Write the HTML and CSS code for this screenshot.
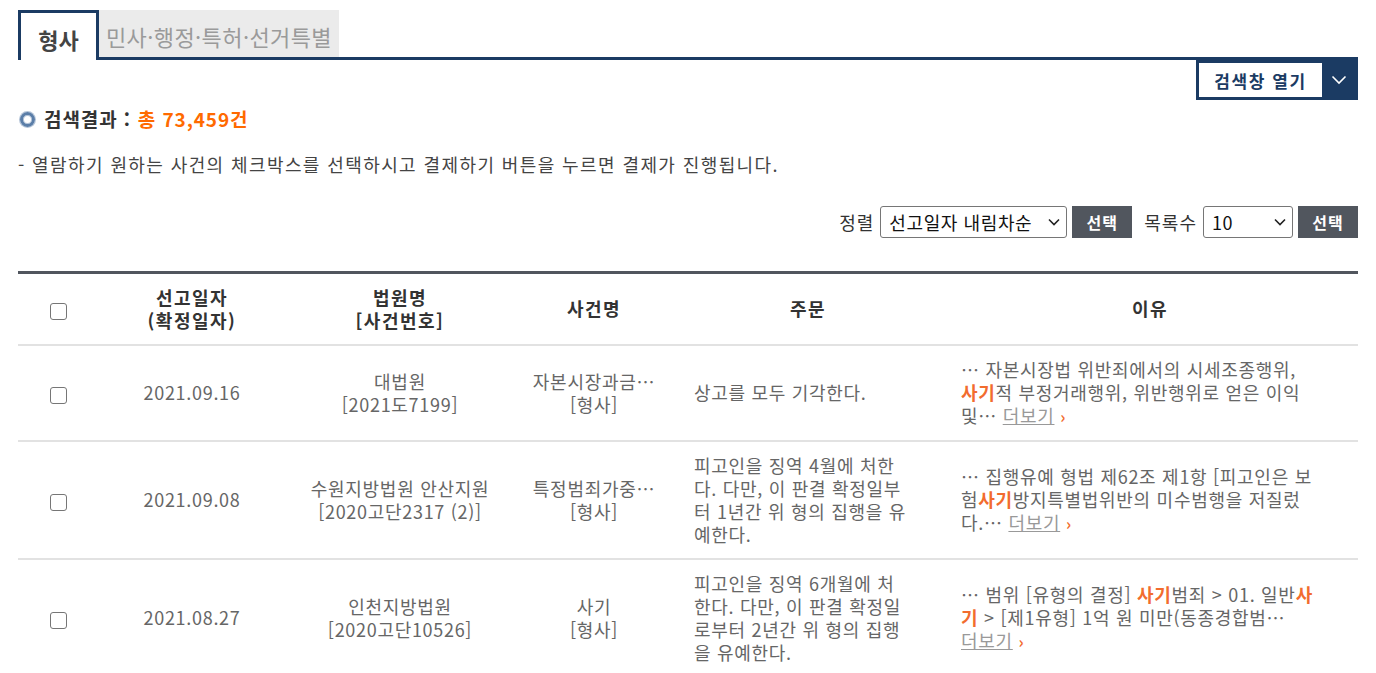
FILE: index.html
```html
<!DOCTYPE html>
<html lang="ko">
<head>
<meta charset="utf-8">
<title>판결서 검색</title>
<link rel="stylesheet" href="styles.css">
</head>
<body>
<div class="wrap">
  <div class="tabs">
    <div class="tab active">형사</div>
    <div class="tab">민사·행정·특허·선거특별</div>
  </div>
  <div class="toggle-row">
    <button class="toggle"><span class="toggle-label">검색창 열기</span><span class="toggle-arrow"><svg width="16" height="10" viewBox="0 0 16 10"><path d="M1.5 1.5 L8 8 L14.5 1.5" fill="none" stroke="#fff" stroke-width="1.6"/></svg></span></button>
  </div>
  <div class="result">
    <span class="bullet"></span>
    <span class="result-label">검색결과 :</span>
    <span class="result-count">총 73,459건</span>
  </div>
  <p class="note">- 열람하기 원하는 사건의 체크박스를 선택하시고 결제하기 버튼을 누르면 결제가 진행됩니다.</p>
  <div class="sort-row">
    <label class="sort-label">정렬</label>
    <span class="sel-wrap sel-sort"><select class="sel"><option>선고일자 내림차순</option></select><svg class="sel-arrow" width="12" height="8" viewBox="0 0 12 8"><path d="M1 1.5 L6 6.5 L11 1.5" fill="none" stroke="#222" stroke-width="1.6"/></svg></span>
    <button class="btn-select">선택</button>
    <label class="sort-label gap">목록수</label>
    <span class="sel-wrap sel-count"><select class="sel"><option>10</option></select><svg class="sel-arrow" width="12" height="8" viewBox="0 0 12 8"><path d="M1 1.5 L6 6.5 L11 1.5" fill="none" stroke="#222" stroke-width="1.6"/></svg></span>
    <button class="btn-select">선택</button>
  </div>
  <table class="list">
    <colgroup>
      <col class="c-chk"><col class="c-date"><col class="c-court"><col class="c-name"><col class="c-order"><col class="c-reason">
    </colgroup>
    <thead>
      <tr>
        <th><span class="chk"></span></th>
        <th>선고일자<br>(확정일자)</th>
        <th>법원명<br>[사건번호]</th>
        <th>사건명</th>
        <th>주문</th>
        <th>이유</th>
      </tr>
    </thead>
    <tbody>
      <tr>
        <td class="center"><span class="chk"></span></td>
        <td class="center">2021.09.16</td>
        <td class="center">대법원<br>[2021도7199]</td>
        <td class="center">자본시장과금…<br>[형사]</td>
        <td class="order">상고를 모두 기각한다.</td>
        <td class="reason">… 자본시장법 위반죄에서의 시세조종행위,<br><b class="hl">사기</b>적 부정거래행위, 위반행위로 얻은 이익<br>및… <span class="more-wrap"><a class="more">더보기</a> <span class="arr">›</span></span></td>
      </tr>
      <tr>
        <td class="center"><span class="chk"></span></td>
        <td class="center">2021.09.08</td>
        <td class="center">수원지방법원 안산지원<br>[2020고단2317 (2)]</td>
        <td class="center">특정범죄가중…<br>[형사]</td>
        <td class="order">피고인을 징역 4월에 처한<br>다. 다만, 이 판결 확정일부<br>터 1년간 위 형의 집행을 유<br>예한다.</td>
        <td class="reason">… 집행유예 형법 제62조 제1항 [피고인은 보<br>험<b class="hl">사기</b>방지특별법위반의 미수범행을 저질렀<br>다.… <span class="more-wrap"><a class="more">더보기</a> <span class="arr">›</span></span></td>
      </tr>
      <tr>
        <td class="center"><span class="chk"></span></td>
        <td class="center">2021.08.27</td>
        <td class="center">인천지방법원<br>[2020고단10526]</td>
        <td class="center">사기<br>[형사]</td>
        <td class="order">피고인을 징역 6개월에 처<br>한다. 다만, 이 판결 확정일<br>로부터 2년간 위 형의 집행<br>을 유예한다.</td>
        <td class="reason">… 범위 [유형의 결정] <b class="hl">사기</b>범죄 &gt; 01. 일반<b class="hl">사</b><br><b class="hl">기</b> &gt; [제1유형] 1억 원 미만(동종경합범…<br><span class="more-wrap"><a class="more">더보기</a> <span class="arr">›</span></span></td>
      </tr>
    </tbody>
  </table>
</div>
</body>
</html>
```

FILE: styles.css
```css
* { box-sizing: border-box; }
html, body { margin: 0; padding: 0; background: #fff; }
body {
  font-family: "Noto Sans CJK KR", "Noto Sans", sans-serif;
  color: #555;
  font-size: 18px;
}
.wrap {
  width: 1340px;
  margin-left: 18px;
  padding-top: 10px;
}
.tabs {
  display: flex;
  border-bottom: 3px solid #1b3b63;
  height: 50px;
}
.tab {
  height: 47px;
  display: flex;
  align-items: center;
  justify-content: center;
  font-size: 22px;
  color: #9a9a9a;
  background: #ebebeb;
  width: 240px;
  letter-spacing: 0.4px;
  padding-top: 4px;
}
.tab.active {
  width: 81px;
  height: 50px;
  background: #fff;
  border: 3px solid #1b3b63;
  border-bottom: none;
  color: #444;
  font-weight: bold;
  letter-spacing: 0;
  margin-bottom: -3px;
}
.toggle-row {
  display: flex;
  justify-content: flex-end;
}
.toggle {
  display: flex;
  height: 40px;
  padding: 0;
  border: 3px solid #1b3b63;
  background: #1b3b63;
  font-family: inherit;
  cursor: pointer;
}
.toggle-label {
  width: 123px;
  height: 34px;
  background: #fff;
  color: #1b3b63;
  font-weight: bold;
  font-size: 17px;
  letter-spacing: 1.6px;
  display: flex;
  align-items: center;
  justify-content: center;
}
.toggle-arrow {
  width: 33px;
  display: flex;
  align-items: center;
  justify-content: center;
}
.result {
  display: flex;
  align-items: center;
  margin-top: 7px;
  font-weight: bold;
  font-size: 19px;
  line-height: 24px;
  letter-spacing: 0.9px;
}
.bullet {
  width: 15px;
  height: 15px;
  border-radius: 50%;
  border: 3px solid #5b7ea8;
  box-shadow: 0 0 0 1px #b4c4d8, inset 0 0 0 1px #b4c4d8;
  margin: 0 9px 0 2px;
}
.result-label { color: #333; margin-right: 7px; }
.result-count { color: #ff6a00; }
.note {
  margin: 21px 0 0;
  font-size: 18px;
  line-height: 24px;
  color: #444;
  letter-spacing: 1.4px;
}
.sort-row {
  display: flex;
  justify-content: flex-end;
  align-items: center;
  margin-top: 30px;
  height: 32px;
}
.sort-label {
  font-size: 18px;
  color: #333;
  margin-right: 6px;
  letter-spacing: 1px;
}
.sort-label.gap { margin-left: 12px; }
.sel-wrap {
  position: relative;
  display: inline-block;
  height: 32px;
}
.sel {
  -webkit-appearance: none;
  appearance: none;
  width: 100%;
  height: 32px;
  font-family: inherit;
  font-size: 18px;
  color: #111;
  border: 1px solid #767676;
  border-radius: 3px;
  background: #fff;
  padding: 0 0 0 8px;
  letter-spacing: 0.6px;
}
.sel-arrow {
  position: absolute;
  right: 7px;
  top: 12px;
  pointer-events: none;
}
.sel-sort { width: 187px; }
.sel-count { width: 90px; }
.btn-select {
  width: 60px;
  height: 32px;
  margin-left: 5px;
  border: none;
  background: #51565e;
  color: #fff;
  font-family: inherit;
  font-weight: bold;
  font-size: 16px;
  letter-spacing: 1px;
  padding: 0;
}
.list {
  width: 1340px;
  margin-top: 33px;
  border-collapse: collapse;
  table-layout: fixed;
  border-top: 3px solid #51565e;
}
.c-chk { width: 80px; }
.c-date { width: 188px; }
.c-court { width: 228px; }
.c-name { width: 160px; }
.c-order { width: 268px; }
.c-reason { width: 416px; }
th {
  height: 72px;
  font-size: 18px;
  line-height: 23px;
  color: #333;
  font-weight: bold;
  letter-spacing: 1.5px;
  text-align: center;
  border-bottom: 2px solid #e2e2e2;
  padding: 0;
}
td {
  font-size: 18px;
  line-height: 23px;
  color: #666;
  letter-spacing: 0.7px;
  border-bottom: 2px solid #e2e2e2;
  padding: 12px 0;
  vertical-align: middle;
  white-space: nowrap;
}
td.center { text-align: center; }
td.order {
  padding-left: 20px;
  padding-right: 10px;
}
td.reason {
  padding-left: 19px;
  padding-right: 10px;
}
.hl { color: #f26c2e; font-weight: bold; }
.more-wrap { white-space: nowrap; }
.more {
  color: #999;
  text-decoration: underline;
}
.arr {
  color: #f26c2e;
  font-weight: bold;
  font-size: 16px;
}
.chk {
  display: inline-block;
  width: 17px;
  height: 17px;
  border: 1.5px solid #767676;
  border-radius: 3px;
  vertical-align: middle;
  background: #fff;
}
```
